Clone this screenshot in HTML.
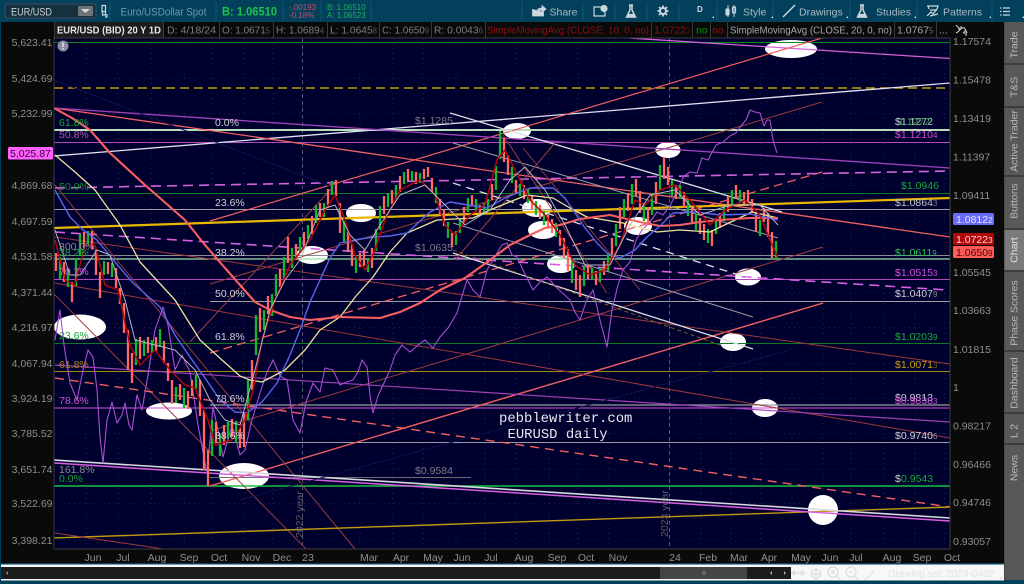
<!DOCTYPE html>
<html><head><meta charset="utf-8"><style>
html,body{margin:0;padding:0;background:#03405c}
body{width:1024px;height:584px;overflow:hidden;position:relative}
svg{position:absolute;left:0;top:0;filter:blur(.35px)}
text{font-family:"Liberation Sans","DejaVu Sans",sans-serif;font-size:10.5px}
</style></head><body>
<svg width="1024" height="584" viewBox="0 0 1024 584" xmlns="http://www.w3.org/2000/svg">
<rect width="1024" height="584" fill="#03405c"/>
<!-- toolbar separators -->
<g stroke="#0b5a78" stroke-width="1">
<line x1="110" y1="2" x2="110" y2="20"/><line x1="216" y1="2" x2="216" y2="20"/><line x1="283" y1="2" x2="283" y2="20"/><line x1="321" y1="2" x2="321" y2="20"/><line x1="371" y1="2" x2="371" y2="20"/>
<line x1="522" y1="2" x2="522" y2="20"/><line x1="583" y1="2" x2="583" y2="20"/><line x1="615" y1="2" x2="615" y2="20"/><line x1="647" y1="2" x2="647" y2="20"/><line x1="679" y1="2" x2="679" y2="20"/><line x1="717" y1="2" x2="717" y2="20"/><line x1="773" y1="2" x2="773" y2="20"/><line x1="850" y1="2" x2="850" y2="20"/><line x1="917" y1="2" x2="917" y2="20"/><line x1="992" y1="2" x2="992" y2="20"/>
</g>
<!-- symbol box -->
<rect x="5" y="4" width="91" height="14" rx="2" fill="#15303e" stroke="#3b4f5a"/>
<text x="11" y="15.5" fill="#c8d0d4" style="font-size:11px" textLength="41" lengthAdjust="spacingAndGlyphs">EUR/USD</text>
<rect x="78" y="6" width="15" height="10" rx="1" fill="#6c7478"/>
<path d="M81 9h9l-4.500 4z" fill="#d8d8d8"/>
<path d="M102 5.500h3.500v6h-3.500zM102.500 11.500v3.500h3v-3.500M107 14v3h-2" fill="none" stroke="#cfd6da" stroke-width="1.200"/>
<text x="120.500" y="15.500" fill="#6f98ac" style="font-size:11px" textLength="86" lengthAdjust="spacingAndGlyphs">Euro/USDollar Spot</text>
<text x="222" y="15.500" fill="#19c64a" style="font-size:12px;font-weight:bold" textLength="55" lengthAdjust="spacingAndGlyphs">B: 1.06510</text>
<text x="289" y="10" fill="#c05068" style="font-size:8px">-.00193</text>
<text x="289" y="18" fill="#c05068" style="font-size:8px">-0.18%</text>
<text x="327" y="10" fill="#1bb158" style="font-size:8px">B: 1.06510</text>
<text x="327" y="18" fill="#1bb158" style="font-size:8px">A: 1.06523</text>
<!-- right toolbar -->
<g fill="none" stroke="#c9d6dc" stroke-width="1.200">
<path d="M532.500 9v7h11v-4M536 12c1-3 3-4 6-4V5.500l4 3.500-4 3.500V10c-3 0-4 .8-6 2z" fill="#c9d6dc" stroke-width=".8"/>
<path d="M594 7h11v9h-11z"/><circle cx="604" cy="8.500" r="3" fill="#c9d6dc"/>
<path d="M629 5h4M630 5v5l-3.500 7h9L632 10V5" stroke-width="1.500"/><path d="M628 14.500h6l1 2.500h-8z" fill="#c9d6dc"/>
<circle cx="663" cy="11" r="3" stroke-width="2"/><path d="M663 5.500v2M663 14.500v2M657.500 11h2M666.500 11h2M659 7l1.500 1.500M667 7l-1.500 1.500M659 15l1.500-1.500M667 15l-1.500-1.500" stroke-width="1.800"/>
<path d="M728 5v12M734 5v12" stroke-width="1"/><rect x="726" y="9" width="3" height="6" rx="1" fill="#c9d6dc"/><rect x="732.500" y="7" width="3" height="6" rx="1" fill="none"/>
<path d="M783 17l12-12" stroke-width="1.500"/>
<path d="M860 5h4M861 5v5l-3.500 7h9L863 10V5" stroke-width="1.500"/><path d="M859 14.500h6l1 2.500h-8z" fill="#c9d6dc"/>
<path d="M927 6h11l-1 3M928 6l1 3M927 16l4-4 2 2 4-5M930 10h7M930 16l8-2"/>
<path d="M1003 8h7M1003 11.500h7M1003 15h7M1000 8h1.500M1000 11.500h1.500M1000 15h1.500" stroke-width="1.300"/>
</g>
<g>
<text x="549.500" y="15.500" fill="#a9bcc5" style="font-size:10.500px">Share</text>
<text x="697" y="12" fill="#d0dce2" style="font-size:8px;font-weight:bold">D</text>
<text x="743" y="15.500" fill="#a9bcc5" style="font-size:10.500px">Style</text>
<text x="799" y="15.500" fill="#a9bcc5" style="font-size:10.500px">Drawings</text>
<text x="876" y="15.500" fill="#a9bcc5" style="font-size:10.500px">Studies</text>
<text x="943" y="15.500" fill="#a9bcc5" style="font-size:10.500px">Patterns</text>
</g>
<g fill="#d5dde0"><path d="M712 18l2-2v2zM771 18l2-2v2zM846 18l2-2v2zM914 18l2-2v2zM989 18l2-2v2zM1022 18l2-2v2z"/></g>

<!-- main black -->
<rect x="1" y="22" width="1003" height="541" fill="#0a0a0a"/>
<!-- legend -->
<rect x="54" y="22" width="109" height="16" fill="#1c1c1c"/>
<g stroke="#3a3a3a"><line x1="54.500" y1="22" x2="54.500" y2="38"/><line x1="163.500" y1="22" x2="163.500" y2="38"/><line x1="219.500" y1="22" x2="219.500" y2="38"/><line x1="273.500" y1="22" x2="273.500" y2="38"/><line x1="327.500" y1="22" x2="327.500" y2="38"/><line x1="379.500" y1="22" x2="379.500" y2="38"/><line x1="431.500" y1="22" x2="431.500" y2="38"/><line x1="485.500" y1="22" x2="485.500" y2="38"/><line x1="651.500" y1="22" x2="651.500" y2="38"/><line x1="692.500" y1="22" x2="692.500" y2="38"/><line x1="710.500" y1="22" x2="710.500" y2="38"/><line x1="727.500" y1="22" x2="727.500" y2="38"/><line x1="894.500" y1="22" x2="894.500" y2="38"/><line x1="936.500" y1="22" x2="936.500" y2="38"/></g>
<text x="57" y="33.500" fill="#e6e6e6" style="font-size:10.500px;font-weight:bold" textLength="104" lengthAdjust="spacingAndGlyphs">EUR/USD (BID) 20 Y 1D</text>
<g fill="#7c7c7c" style="font-size:10.500px">
<text x="167" y="33.500" textLength="49" lengthAdjust="spacingAndGlyphs">D: 4/18/24</text>
<text x="222" y="33.500" textLength="48" lengthAdjust="spacingAndGlyphs">O: 1.0671<tspan fill="#555" font-size="8">5</tspan></text>
<text x="276" y="33.500" textLength="48" lengthAdjust="spacingAndGlyphs">H: 1.0689<tspan fill="#555" font-size="8">4</tspan></text>
<text x="330" y="33.500" textLength="47" lengthAdjust="spacingAndGlyphs">L: 1.0645<tspan fill="#555" font-size="8">8</tspan></text>
<text x="382" y="33.500" textLength="47" lengthAdjust="spacingAndGlyphs">C: 1.0650<tspan fill="#555" font-size="8">9</tspan></text>
<text x="434" y="33.500" textLength="49" lengthAdjust="spacingAndGlyphs">R: 0.0043<tspan fill="#555" font-size="8">6</tspan></text>
</g>
<text x="487" y="33.500" fill="#8e1010" textLength="162" lengthAdjust="spacingAndGlyphs">SimpleMovingAvg (CLOSE, 10, 0, no)</text>
<text x="654" y="33.500" fill="#8e1010">1.0722<tspan font-size="8" fill="#5e0c0c">3</tspan></text>
<text x="696" y="33.500" fill="#0a8a0a">no</text>
<text x="712" y="33.500" fill="#8e1010">no</text>
<text x="730" y="33.500" fill="#a8a8a8" textLength="162" lengthAdjust="spacingAndGlyphs">SimpleMovingAvg (CLOSE, 20, 0, no)</text>
<text x="897" y="33.500" fill="#a8a8a8">1.0767<tspan font-size="8" fill="#666">5</tspan></text>
<text x="939" y="33.500" fill="#a8a8a8">...</text>
<path d="M956 25l4 4M961 26v3h-3M956 33c3-1 4-4 6-5s3 0 5 5M966 30l-3 3M963 33h3v3" fill="none" stroke="#c8c8c8" stroke-width="1.100"/>

<!-- plot -->
<rect x="54" y="38" width="896" height="511" fill="#00002f"/>
<clipPath id="p"><rect x="54.500" y="38" width="895.500" height="511"/></clipPath>
<g stroke="#3c3c58" stroke-width=".6" stroke-dasharray="1 4" fill="none">
<path d="M54 78.500H950M54 113.500H950M54 185.500H950M54 221.500H950M54 292.500H950M54 327.500H950M54 363.500H950M54 398.500H950M54 433.500H950M54 469.500H950M54 503.500H950M54 540.500H950"/>
<path d="M86 38V549M118 38V549M151 38V549M184 38V549M212 38V549M244 38V549M273 38V549M360 38V549M393 38V549M423 38V549M456 38V549M485 38V549M516 38V549M549 38V549M578 38V549M609 38V549M701 38V549M731 38V549M761 38V549M792 38V549M823 38V549M851 38V549M884 38V549M915 38V549M945 38V549"/>
</g>
<g stroke="#5c5c76" stroke-width=".9" stroke-dasharray="4 3"><line x1="302.500" y1="38" x2="302.500" y2="549"/><line x1="669.500" y1="38" x2="669.500" y2="549"/></g>

<g clip-path="url(#p)">
<!-- ellipses -->
<g fill="#fff">
<ellipse cx="791" cy="49" rx="26" ry="9"/><ellipse cx="517" cy="131" rx="14" ry="8"/><ellipse cx="668" cy="150" rx="12.500" ry="8"/><ellipse cx="361" cy="213" rx="15" ry="9"/><ellipse cx="312" cy="255" rx="16" ry="9"/><ellipse cx="537" cy="208" rx="15" ry="9"/><ellipse cx="543" cy="230" rx="15" ry="9"/><ellipse cx="561" cy="264" rx="14" ry="9"/><ellipse cx="638" cy="226" rx="14" ry="9"/><ellipse cx="748" cy="277" rx="13" ry="8.500"/><ellipse cx="733" cy="342" rx="13" ry="9"/><ellipse cx="80" cy="327" rx="26" ry="12.500"/><ellipse cx="169" cy="411" rx="23" ry="8.500"/><ellipse cx="244" cy="476" rx="25" ry="13"/><ellipse cx="765" cy="408" rx="13" ry="9"/><ellipse cx="823" cy="510" rx="15" ry="15"/>
</g>
<!-- horizontal -->
<line x1="54" y1="42.500" x2="950" y2="42.500" stroke="#0a8a1a" stroke-width="1.100"/>
<line x1="54" y1="88" x2="950" y2="88" stroke="#c59a14" stroke-width="1.400" stroke-dasharray="9 5"/>
<line x1="54" y1="130" x2="950" y2="130" stroke="#b8dcbc" stroke-width="2"/>
<line x1="54" y1="142.500" x2="950" y2="142.500" stroke="#b048c0" stroke-width="1"/>
<line x1="54" y1="193.500" x2="950" y2="193.500" stroke="#0c7a20" stroke-width="1"/>
<line x1="54" y1="209.500" x2="950" y2="209.500" stroke="#a0a0a8" stroke-width="1"/>
<line x1="54" y1="255.500" x2="950" y2="255.500" stroke="#8a8a90" stroke-width="1"/>
<line x1="54" y1="259" x2="950" y2="259" stroke="#9be0a8" stroke-width="1.200"/>
<line x1="54" y1="279.500" x2="950" y2="279.500" stroke="#b048c0" stroke-width="1"/>
<line x1="210" y1="301.500" x2="950" y2="301.500" stroke="#a0a0a8" stroke-width="1"/>
<line x1="54" y1="343.500" x2="950" y2="343.500" stroke="#0c7a20" stroke-width="1"/>
<line x1="54" y1="371.500" x2="950" y2="371.500" stroke="#a48a10" stroke-width="1"/>
<line x1="210" y1="405" x2="950" y2="405" stroke="#9a9aa4" stroke-width="1.200"/>
<line x1="54" y1="408" x2="950" y2="408" stroke="#d050d8" stroke-width="1"/>
<line x1="210" y1="442.500" x2="950" y2="442.500" stroke="#9a9aa4" stroke-width="1"/>
<line x1="210" y1="477.500" x2="471" y2="477.500" stroke="#6c6c74" stroke-width="1"/>
<line x1="54" y1="486" x2="950" y2="486" stroke="#1ac040" stroke-width="1.600"/>
<!-- diagonals -->
<g fill="none">
<line x1="54" y1="156" x2="1024" y2="77" stroke="#e0e0f0" stroke-width="1.300"/>
<line x1="629" y1="38" x2="950" y2="58.500" stroke="#d860d8" stroke-width="1.300"/>
<line x1="210" y1="221" x2="822" y2="38" stroke="#f06060" stroke-width="1.200"/>
<line x1="210" y1="353" x2="822" y2="172" stroke="#f06060" stroke-width="1.300" stroke-dasharray="9 5"/>
<line x1="210" y1="486" x2="823" y2="303" stroke="#f06060" stroke-width="1.400"/>
<line x1="210" y1="284" x2="822" y2="102" stroke="#9a3c3c" stroke-width="1"/>
<line x1="210" y1="431" x2="823" y2="247" stroke="#9a3c3c" stroke-width="1"/>
<line x1="190" y1="342" x2="333" y2="187" stroke="#9a3c3c" stroke-width="1"/>
<line x1="50" y1="290" x2="320" y2="563" stroke="#9a3c3c" stroke-width="1"/>
<line x1="55" y1="185" x2="355" y2="549" stroke="#9a3c3c" stroke-width="1"/>
<line x1="54" y1="108" x2="950" y2="237" stroke="#f06060" stroke-width="1.300"/>
<line x1="54" y1="108" x2="950" y2="168" stroke="#a040b8" stroke-width="1.300"/>
<line x1="55" y1="237" x2="950" y2="364" stroke="#a03838" stroke-width="1"/>
<line x1="55" y1="283" x2="950" y2="438" stroke="#a03838" stroke-width="1"/>
<line x1="55" y1="365" x2="950" y2="422" stroke="#9c40b4" stroke-width="1.200"/>
<line x1="55" y1="378" x2="950" y2="507" stroke="#f06060" stroke-width="1.400" stroke-dasharray="9 6"/>
<line x1="54" y1="228" x2="950" y2="198" stroke="#e8b800" stroke-width="2.200"/>
<line x1="54" y1="538" x2="950" y2="507" stroke="#c09a10" stroke-width="1.400"/>
<line x1="54" y1="460" x2="950" y2="518" stroke="#d8d8e0" stroke-width="1.600"/>
<line x1="54" y1="463" x2="950" y2="521" stroke="#d860e0" stroke-width="1.500"/>
<line x1="55" y1="188" x2="950" y2="171" stroke="#d860e0" stroke-width="1.600" stroke-dasharray="10 6"/>
<line x1="55" y1="232" x2="947" y2="290" stroke="#d860e0" stroke-width="1.600" stroke-dasharray="10 6"/>
<line x1="55" y1="533" x2="170" y2="550" stroke="#9a3c3c" stroke-width="1"/>
<line x1="450" y1="113" x2="782" y2="212" stroke="#dcdce4" stroke-width="1.300"/>
<line x1="453" y1="143" x2="778" y2="238" stroke="#9a9aa4" stroke-width="1"/>
<line x1="453" y1="183" x2="748" y2="278" stroke="#dcdce4" stroke-width="1.300" stroke-dasharray="8 6"/>
<line x1="453" y1="223" x2="753" y2="317" stroke="#9a9aa4" stroke-width="1"/>
<line x1="453" y1="253" x2="753" y2="349" stroke="#dcdce4" stroke-width="1.300"/>
<line x1="503" y1="135" x2="607" y2="293" stroke="#9a3c3c" stroke-width="1"/>
<line x1="555" y1="143" x2="455" y2="260" stroke="#9a3c3c" stroke-width="1"/>
<line x1="523" y1="148" x2="640" y2="290" stroke="#9a3c3c" stroke-width=".9"/>
<line x1="453" y1="250" x2="720" y2="345" stroke="#8a6a18" stroke-width=".9" stroke-dasharray="4 3"/>
<line x1="54" y1="80" x2="340" y2="190" stroke="#10104e" stroke-width="1"/>
<line x1="240" y1="500" x2="790" y2="350" stroke="#10104e" stroke-width="1"/>
</g>
<!-- SPX purple -->
<polyline fill="none" stroke="#a84ed0" stroke-width="1.100" stroke-linejoin="round" points="55,340 60,310 64,345 70,383 77,400 83,370 88,350 93,357 97,390 100,437 103,463 107,420 112,402 117,423 122,415 125,403 129,425 132,430 137,395 142,410 148,375 155,330 163,307 168,325 175,370 182,355 190,372 198,425 207,473 213,407 218,430 223,457 232,425 240,455 245,450 252,420 260,393 267,372 273,360 280,376 287,380 293,420 300,433 306,402 313,383 320,392 325,368 333,370 340,385 347,382 353,380 358,372 362,360 367,367 370,395 373,413 378,396 383,385 390,370 395,355 402,345 410,352 418,345 425,340 433,348 440,337 448,328 457,313 462,296 467,280 473,290 480,297 487,270 497,253 502,245 507,243 512,255 517,257 524,272 533,290 540,282 547,277 557,288 570,300 575,312 580,320 586,302 593,290 600,320 607,347 612,310 618,285 623,270 630,262 636,240 642,230 650,222 657,212 663,215 670,206 676,193 684,176 690,172 697,173 702,158 708,160 716,145 723,142 730,136 736,133 740,127 746,120 750,110 755,112 760,113 764,126 767,120 770,120 773,140 777,153"/>
<!-- candles green -->
<path fill="none" stroke="#12b82a" stroke-width="2.300" d="M60 257v22M68 269v18M76 258v28M80 234v22M88 231v14M104 261v14M112 263v14M136 339v26M144 340v16M152 340v12M160 329v18M176 387v16M184 388v20M196 375v14M212 420v36M220 434v22M228 422v16M236 421v22M248 380v40M256 315v40M264 310v20M272 294v22M276 274v22M284 257v22M292 248v20M300 237v16M308 225v14M316 205v18M324 203v14M332 181v14M344 221v22M356 257v16M368 258v14M376 229v22M380 206v24M388 193v14M396 185v14M404 172v12M412 171v10M420 173v10M436 187v16M448 222v16M456 231v14M460 219v14M468 198v14M476 199v12M484 203v10M488 199v12M496 166v24M500 131v28M512 167v16M520 184v12M528 189v14M536 201v14M544 211v14M556 223v14M572 261v22M584 266v20M592 268v12M600 268v14M608 253v18M616 224v22M624 199v18M632 184v20M644 203v18M652 195v20M660 165v26M672 180v16M680 185v14M688 200v16M696 214v16M708 229v14M716 218v16M724 207v14M732 190v16M740 190v12M760 220v16M776 241v18"/>
<!-- candles red -->
<path fill="none" stroke="#ff6a60" stroke-width="2.300" d="M56 253v18M64 262v20M72 282v20M84 232v16M92 231v18M96 249v26M100 272v26M108 262v12M116 268v20M120 288v16M124 303v30M128 330v40M132 353v30M140 337v22M148 337v16M156 337v14M164 341v22M168 363v18M172 380v24M180 384v16M188 391v18M192 380v16M200 380v36M204 410v60M208 450v36M216 422v20M224 425v20M232 419v18M240 428v20M244 413v34M252 360v30M260 308v24M268 296v18M280 269v18M288 237v26M296 244v16M304 232v16M312 216v18M320 203v14M328 189v18M336 180v16M340 203v30M348 232v20M352 244v22M360 253v14M364 250v16M372 248v20M384 196v18M392 190v14M400 176v16M408 169v12M416 172v12M424 169v10M428 167v10M432 178v14M440 199v16M444 210v16M452 233v14M464 207v16M472 195v10M480 205v10M492 184v16M504 138v24M508 155v20M516 180v14M524 185v14M532 195v14M540 205v14M548 215v14M552 219v14M560 230v16M564 238v20M568 249v22M576 270v20M580 275v22M588 265v14M596 271v14M604 261v14M612 238v20M620 207v22M628 193v18M636 179v18M640 191v22M648 207v18M656 182v22M664 157v22M668 167v18M676 185v14M684 192v16M692 208v16M700 218v16M704 224v16M712 230v16M720 213v14M728 196v16M736 185v14M744 192v12M748 190v12M752 199v14M756 212v20M764 208v14M768 213v24M772 232v26"/>
<!-- yellow -->
<polyline fill="none" stroke="#ece29a" stroke-width="1.300" stroke-linejoin="round" points="55,155 75,172 95,190 120,225 140,262 175,300 200,340 222,360 240,376 250,380 262,382 285,370 305,350 320,330 340,317 356,296 373,277 390,252 407,233 437,220 473,218 490,210 507,203 527,195 553,198 570,208 587,217 623,223 657,232 680,230 710,232 735,220 752,212 778,218"/>
<!-- thick salmon 200 -->
<polyline fill="none" stroke="#f86060" stroke-width="2.100" stroke-linejoin="round" points="54,108 72,118 90,130 110,153 145,185 185,220 205,245 225,268 240,285 255,302 270,310 290,317 310,320 340,317 380,318 400,312 420,303 440,290 465,278 490,260 510,245 530,235 545,228 560,225 580,219 610,215 640,222 660,226 680,225 700,222 720,220 750,218 778,218"/>
<!-- blue -->
<polyline fill="none" stroke="#5a64e8" stroke-width="1.400" stroke-linejoin="round" points="55,190 70,217 83,230 97,240 115,262 133,283 160,307 175,335 190,357 205,378 220,400 235,412 247,413 262,402 277,383 290,355 300,330 310,302 320,280 330,258 340,243 355,240 373,237 390,236 407,233 430,212 450,202 468,205 487,208 505,198 530,188 553,188 565,198 573,210 585,228 597,243 608,254 620,258 635,250 647,237 660,226 673,213 695,212 720,215 750,214 778,220"/>
<!-- dark red ema -->
<polyline fill="none" stroke="#b00808" stroke-width="1.500" stroke-linejoin="round" points="55,240 65,280 75,285 85,245 95,245 105,285 118,290 130,345 140,365 155,350 170,370 185,385 195,388 208,420 215,445 232,440 245,420 253,390 262,340 275,300 290,265 310,240 325,210 335,195 345,220 355,255 365,270 375,250 385,220 400,190 420,180 435,195 445,225 455,235 470,215 485,205 497,160 505,150 515,170 530,200 545,215 560,235 575,265 590,275 605,270 620,245 635,200 645,205 660,190 675,185 690,200 710,225 725,210 745,200 760,215 770,240 778,258"/>
<!-- grey sma -->
<polyline fill="none" stroke="#b4b4c0" stroke-width="1" stroke-linejoin="round" points="55,230 70,275 80,275 97,250 110,255 125,300 135,340 155,345 175,350 195,370 210,400 225,420 240,425 255,370 270,310 285,280 300,260 320,210 335,205 350,235 365,250 380,225 400,195 425,185 445,205 465,225 490,210 510,180 525,167 545,190 565,225 585,265 610,265 630,225 650,195 675,190 700,215 730,205 760,205 778,225"/>
</g>
<!-- chart text -->
<g style="font-size:10px">
<text x="59" y="126" fill="#1aa838">61.8%</text><text x="59" y="138" fill="#a858b0">50.8%</text><text x="59" y="190" fill="#0e8a2c">50.0%</text>
<text x="59" y="250" fill="#888">300.0%</text><text x="59" y="256" fill="#1aa838">38.2%</text><text x="59" y="275" fill="#d050d8">70.7%</text>
<text x="59" y="339" fill="#1aa838">23.6%</text><text x="59" y="368" fill="#a48a10">61.8%</text><text x="59" y="404" fill="#d050d8">78.6%</text>
<text x="59" y="473" fill="#8a8a90">161.8%</text><text x="59" y="482" fill="#0ea82c">0.0%</text>
<g fill="#d0d0d8"><text x="215" y="126">0.0%</text><text x="215" y="206">23.6%</text><text x="215" y="256">38.2%</text><text x="215" y="297">50.0%</text><text x="215" y="340">61.8%</text><text x="215" y="402">78.6%</text><text x="215" y="439">88.6%</text></g>
<g fill="#7a7a84"><text x="415" y="124">$1.1285</text><text x="415" y="251">$1.0635</text><text x="415" y="474">$0.9584</text></g>
<text x="895" y="125" fill="#d0d0d8">$1.1272</text><text x="898" y="125" fill="#1aa838">1.1272</text>
<text x="895" y="138" fill="#d050d8">$1.1210<tspan font-size="8">4</tspan></text>
<text x="901" y="189" fill="#1aa838">$1.0946</text>
<text x="895" y="206" fill="#c0c0c8">$1.0864<tspan font-size="8" fill="#777">3</tspan></text>
<text x="895" y="256" fill="#28c050">$1.0611<tspan font-size="8">9</tspan></text>
<text x="895" y="276" fill="#d050d8">$1.0515<tspan font-size="8">3</tspan></text>
<text x="895" y="297" fill="#d0d0d8">$1.0407<tspan font-size="8" fill="#888">9</tspan></text>
<text x="895" y="340" fill="#1aa838">$1.0203<tspan font-size="8">9</tspan></text>
<text x="895" y="368" fill="#c8a010">$1.0071<tspan font-size="8" fill="#7a6410">3</tspan></text>
<text x="895" y="401" fill="#d0d0d8">$0.9813</text><text x="895" y="404" fill="#d050d8">$0.9838<tspan font-size="8">3</tspan></text>
<text x="895" y="439" fill="#d0d0d8">$0.9740<tspan font-size="8" fill="#888">6</tspan></text>
<text x="895" y="482" fill="#d0d0d8">$</text><text x="901" y="482" fill="#1aa838">0.9543</text>
</g>
<g fill="#5a5a66" style="font-size:10px"><text transform="translate(303,538) rotate(-90)">2022 year</text><text transform="translate(668,537) rotate(-90)">2023 year</text></g>
<text x="499" y="422" fill="#e8e8f0" style="font-family:'Liberation Mono',monospace;font-size:13.900px">pebblewriter.com</text>
<text x="507.500" y="438" fill="#e8e8f0" style="font-family:'Liberation Mono',monospace;font-size:13.900px">EURUSD daily</text>
<circle cx="63" cy="46" r="5.500" fill="#8a8aa0"/><rect x="62.300" y="42.500" width="1.400" height="4.500" fill="#eee"/><rect x="62.300" y="48" width="1.400" height="1.400" fill="#eee"/>
<rect x="54" y="38" width="896" height="511" fill="none" stroke="#3c3c40"/>
<!-- left axis -->
<g fill="#8e8e8e" text-anchor="end" style="font-size:10.500px">
<text x="52.500" y="46">5,623.41</text><text x="52.500" y="82">5,424.69</text><text x="52.500" y="117">5,232.99</text><text x="52.500" y="189">4,869.68</text><text x="52.500" y="225">4,697.59</text><text x="52.500" y="260">4,531.58</text><text x="52.500" y="296">4,371.44</text><text x="52.500" y="331">4,216.97</text><text x="52.500" y="367">4,067.94</text><text x="52.500" y="402">3,924.19</text><text x="52.500" y="437">3,785.52</text><text x="52.500" y="473">3,651.74</text><text x="52.500" y="507">3,522.69</text><text x="52.500" y="544">3,398.21</text>
</g>
<rect x="8" y="147" width="45" height="12.500" rx="1.500" fill="#ff60ff"/>
<text x="10" y="157" fill="#300030" style="font-size:10.500px">5,025.87</text>
<!-- right axis -->
<g fill="#8e8e8e" style="font-size:10.500px">
<text x="953" y="45">1.17574</text><text x="953" y="83.500">1.15478</text><text x="953" y="122">1.13419</text><text x="953" y="160.500">1.11397</text><text x="953" y="199">1.09411</text><text x="953" y="276">1.05545</text><text x="953" y="314">1.03663</text><text x="953" y="353">1.01815</text><text x="953" y="391">1</text><text x="953" y="429.500">0.98217</text><text x="953" y="468">0.96466</text><text x="953" y="506">0.94746</text><text x="953" y="545">0.93057</text>
</g>
<rect x="953" y="213" width="41" height="12" rx="1.500" fill="#6a6cf8"/><text x="956" y="223" fill="#e0e4ff">1.0812<tspan font-size="8">2</tspan></text>
<rect x="953" y="233" width="41" height="12" rx="1.500" fill="#b00808"/><text x="956" y="243" fill="#ffd8d8">1.0722<tspan font-size="8">3</tspan></text>
<rect x="953" y="246" width="41" height="12" rx="1.500" fill="#ff5a58"/><text x="956" y="256" fill="#3a0808">1.0650<tspan font-size="8">9</tspan></text>
<!-- time axis -->
<g fill="#8e8e8e" text-anchor="middle" style="font-size:10.500px">
<text x="93" y="561">Jun</text><text x="123" y="561">Jul</text><text x="157" y="561">Aug</text><text x="189" y="561">Sep</text><text x="219" y="561">Oct</text><text x="251" y="561">Nov</text><text x="282" y="561">Dec</text><text x="308" y="561">23</text><text x="369" y="561">Mar</text><text x="401" y="561">Apr</text><text x="433" y="561">May</text><text x="462" y="561">Jun</text><text x="491" y="561">Jul</text><text x="524" y="561">Aug</text><text x="557" y="561">Sep</text><text x="586" y="561">Oct</text><text x="618" y="561">Nov</text><text x="675" y="561">24</text><text x="708" y="561">Feb</text><text x="739" y="561">Mar</text><text x="769" y="561">Apr</text><text x="801" y="561">May</text><text x="830" y="561">Jun</text><text x="856" y="561">Jul</text><text x="892" y="561">Aug</text><text x="922" y="561">Sep</text><text x="952" y="561">Oct</text>
</g>
<!-- bottom -->
<rect x="1" y="564.500" width="1003" height="16" fill="#f8f8f8"/>
<rect x="1" y="567" width="790" height="12" fill="#1c1c1c"/>
<rect x="660" y="567" width="87" height="12" fill="#454545"/>
<rect x="702" y="571" width="4" height="4" fill="#666"/>
<path d="M8 571v4l-2-2z" fill="#888"/><path d="M772 571v4l-2-2zM784 571v4l2-2z" fill="#aaa"/>
<g fill="none" stroke="#dcdcdc" stroke-width="1.200"><path d="M793 573h10M795 570.500l-3 2.500 3 2.500M801 570.500l3 2.500-3 2.500"/><circle cx="816" cy="574" r="4.500"/><path d="M816 568v12M810 574h12"/><circle cx="833" cy="572" r="5"/><path d="M836.500 576l4 4M831 572h4M833 570v4"/><circle cx="851" cy="572" r="5"/><path d="M854.500 576l4 4M849 572h4"/><path d="M864 581l11-11"/></g>
<text x="888" y="577" fill="#e2e2e2" style="font-size:10px">Drawing set: 2024-0402</text>
<path d="M1000 579l2-2v2z" fill="#bbb"/>
<!-- sidebar -->
<rect x="1004" y="22" width="20" height="558" fill="#3c3c3c"/>
<g fill="#585858">
<rect x="1004.500" y="22" width="19.500" height="41"/><rect x="1004.500" y="65" width="19.500" height="41"/><rect x="1004.500" y="108" width="19.500" height="67"/><rect x="1004.500" y="177" width="19.500" height="51"/><rect x="1004.500" y="272" width="19.500" height="78"/><rect x="1004.500" y="352" width="19.500" height="60"/><rect x="1004.500" y="414" width="19.500" height="29"/><rect x="1004.500" y="445" width="19.500" height="135"/>
</g>
<rect x="1004.500" y="230" width="19.500" height="40" fill="#7a7a7a"/>
<g fill="#b8b8b8" text-anchor="middle" style="font-size:10.500px">
<text transform="translate(1017.500,45) rotate(-90)">Trade</text>
<text transform="translate(1017.500,87) rotate(-90)">T&amp;S</text>
<text transform="translate(1017.500,141) rotate(-90)">Active Trader</text>
<text transform="translate(1017.500,201) rotate(-90)">Buttons</text>
<text transform="translate(1017.500,250) rotate(-90)" fill="#e0e0e0">Chart</text>
<text transform="translate(1017.500,313) rotate(-90)">Phase Scores</text>
<text transform="translate(1017.500,383) rotate(-90)">Dashboard</text>
<text transform="translate(1017.500,431) rotate(-90)">L 2</text>
<text transform="translate(1017.500,468) rotate(-90)">News</text>
</g>
<rect x="0" y="580.500" width="1024" height="3.500" fill="#03405c"/>
</svg>
</body></html>
